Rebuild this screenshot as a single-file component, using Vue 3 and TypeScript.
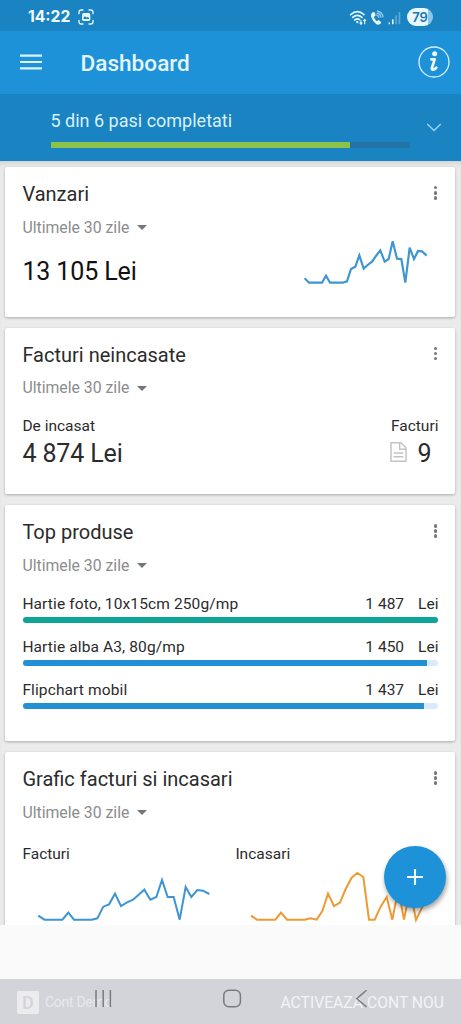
<script setup lang="ts">
interface Product {
  name: string
  amount: string
  share: number
  top?: boolean
}

const period = 'Ultimele 30 zile'

const products: Product[] = [
  { name: 'Hartie foto, 10x15cm 250g/mp', amount: '1 487', share: 100, top: true },
  { name: 'Hartie alba A3, 80g/mp', amount: '1 450', share: 97.4 },
  { name: 'Flipchart mobil', amount: '1 437', share: 96.6 },
]

const salesLine =
  '224,354 237,367 276,367 288,346 300,367 338,367 351,363 363,326 376,319 388,285 401,325 413,314 426,304 438,287 451,270 464,304 476,296 488,243 501,295 514,296 526,367 539,262 552,296 564,272 576,273 590,286'
const invoicesLine =
  '116,529 134,541 188,541 206,520 223,541 276,541 293,537 311,502 328,495 346,463 364,500 381,490 400,481 417,466 434,451 452,481 470,473 487,422 504,473 522,473 540,541 558,443 575,473 593,452 610,454 629,464'
const receiptsLine =
  '63,529 81,541 136,541 153,520 171,541 224,541 242,537 260,541 277,515 294,463 312,500 330,490 347,449 365,415 382,401 400,413 417,541 434,541 452,502 470,473 487,541 505,450 522,541 540,450 558,542 576,505 590,480'
</script>

<template>
  <div class="screen">
    <div class="status">
      <span class="clock">14:22</span>
      <svg class="capture" viewBox="0 0 48 48" width="16" height="16">
        <path d="M3 14V10Q3 3 10 3h5M33 3h5q7 0 7 7v4M45 34v4q0 7-7 7h-5M15 45h-5q-7 0-7-7v-4" fill="none" stroke="#e4f6ff" stroke-width="4" stroke-linecap="round" />
        <rect x="12" y="12" width="25" height="24" rx="5" fill="#e4f6ff" />
        <path d="M17 30v-5l4-3 5 4 3-3 4 4v3z" fill="#1a83c2" />
      </svg>
      <div class="status-right">
        <svg viewBox="356 22 160 56" width="53.3" height="18.7">
          <g fill="none" stroke="#dff5ff" stroke-width="5" stroke-linecap="round">
            <path d="M361 42Q381 24 401 42" />
            <path d="M367 50Q381 38 395 50" />
            <path d="M373 58Q381 52 388 57" />
          </g>
          <circle cx="381" cy="64" r="3.5" fill="#dff5ff" />
          <path d="M392 59v11m-4-4 4 5 4-5M403 71V56m-4 5 4-5 4 5" fill="none" stroke="#dff5ff" stroke-width="3.5" />
          <path d="M427 35q-7 5-4 15 5 14 15 21 8 4 14-3l1-3-8-7-6 4q-6-5-8-13l5-5-3-9z" fill="#e8f8ff" />
          <path d="M438 43q7 1 8 9M439 37q12 2 13 14M440 31q17 3 18 19" fill="none" stroke="#8cc5e9" stroke-width="4" />
          <g fill="#dff5ff">
            <rect x="475" y="65" width="4" height="6" rx="1" />
            <rect x="485" y="56" width="5" height="15" rx="1" />
          </g>
          <g fill="#5ba9d9">
            <rect x="495" y="44" width="5" height="27" rx="1" />
            <rect x="505" y="34" width="5" height="37" rx="1" />
          </g>
        </svg>
        <span class="battery">79</span>
      </div>
    </div>

    <header class="appbar">
      <svg class="menu" viewBox="0 0 22 16" width="22" height="16">
        <path d="M0 1.6h22M0 8h22M0 14.4h22" stroke="#dcf3ff" stroke-width="2.2" />
      </svg>
      <h1>Dashboard</h1>
      <svg class="info" viewBox="565 139 96 96" width="32" height="32">
        <circle cx="613" cy="187" r="45" fill="none" stroke="#d5f1ff" stroke-width="4" />
        <circle cx="615" cy="162" r="7.5" fill="#f2fbff" />
        <path d="M605 179h10l-8 25q-2 7 4 6 5-1 9-6" fill="none" stroke="#f2fbff" stroke-width="8" stroke-linejoin="round" stroke-linecap="round" />
      </svg>
    </header>

    <section class="steps">
      <div class="steps-main">
        <div class="steps-text">5 din 6 pasi completati</div>
        <div class="steps-track"><div class="steps-fill"></div></div>
      </div>
      <svg class="chevron" viewBox="0 0 16 9" width="16" height="9">
        <path d="M1.2 1 8 7.6 14.8 1" fill="none" stroke="#9bd3f3" stroke-width="1.4" />
      </svg>
    </section>

    <main class="content">
      <article class="card sales">
        <div class="head">
          <h2>Vanzari</h2>
          <span class="dots"><i></i><i></i><i></i></span>
        </div>
        <div class="period">{{ period }}<b class="caret"></b></div>
        <div class="sales-row">
          <div class="value dark">13 105 Lei</div>
          <svg class="sales-chart" viewBox="216 233 381 144" width="127" height="48">
            <polyline :points="salesLine" fill="none" stroke="#3d95d3" stroke-width="6.5" />
          </svg>
        </div>
      </article>

      <article class="card unpaid">
        <div class="head">
          <h2>Facturi neincasate</h2>
          <span class="dots"><i></i><i></i><i></i></span>
        </div>
        <div class="period">{{ period }}<b class="caret"></b></div>
        <div class="unpaid-row">
          <div>
            <div class="label">De incasat</div>
            <div class="value">4 874 Lei</div>
          </div>
          <div>
            <div class="label">Facturi</div>
            <div class="count">
              <svg viewBox="0 0 51 60" width="17" height="20">
                <path d="M3 2h30l15 15v41H3zM29 2v20h19" fill="none" stroke="#c4c4c4" stroke-width="4.5" stroke-linejoin="round" />
                <path d="M11 33h29M11 44h29" stroke="#c4c4c4" stroke-width="4.5" />
              </svg>
              <span class="value">9</span>
            </div>
          </div>
        </div>
      </article>

      <article class="card products">
        <div class="head">
          <h2>Top produse</h2>
          <span class="dots"><i></i><i></i><i></i></span>
        </div>
        <div class="period">{{ period }}<b class="caret"></b></div>
        <ul>
          <li v-for="p in products" :key="p.name">
            <div class="product">
              <span class="label name">{{ p.name }}</span>
              <span class="label amount">{{ p.amount }}</span>
              <span class="label unit">Lei</span>
            </div>
            <div class="bar">
              <div class="fill" :class="{ best: p.top }" :style="{ width: p.share + '%' }"></div>
            </div>
          </li>
        </ul>
      </article>

      <article class="card graph">
        <div class="head">
          <h2>Grafic facturi si incasari</h2>
          <span class="dots"><i></i><i></i><i></i></span>
        </div>
        <div class="period">{{ period }}<b class="caret"></b></div>
        <div class="charts">
          <div class="chart">
            <div class="label">Facturi</div>
            <svg viewBox="67 380 573 180" width="191" height="60">
              <polyline :points="invoicesLine" fill="none" stroke="#3d95d3" stroke-width="6" />
            </svg>
          </div>
          <div class="chart">
            <div class="label">Incasari</div>
            <svg viewBox="15 380 600 180" width="200" height="60">
              <polyline :points="receiptsLine" fill="none" stroke="#ee9a33" stroke-width="6" />
            </svg>
          </div>
        </div>
      </article>
    </main>

    <footer class="bottom">
      <span class="badge">D</span>
      <span class="account">Cont Demo</span>
      <span class="activate">ACTIVEAZA CONT NOU</span>
      <svg class="nav" viewBox="0 0 461 45" width="461" height="45">
        <g fill="none" stroke="#797a80" stroke-width="1.5">
          <path d="M96 11v17M103.2 11v17M110.4 11v17" />
          <rect x="223.8" y="11.3" width="16.6" height="16.4" rx="5" />
          <path d="M366.5 11.2 356.8 19.6 366.5 28" />
        </g>
      </svg>
    </footer>

    <button class="fab" aria-label="Adauga">
      <svg viewBox="0 0 16 16" width="16" height="16">
        <path d="M8 0v16M0 8h16" stroke="#f0faff" stroke-width="2.1" />
      </svg>
    </button>
  </div>
</template>

<style>
body {
  margin: 0;
}
</style>

<style scoped>
.screen {
  position: relative;
  display: flex;
  flex-direction: column;
  width: 461px;
  height: 1024px;
  overflow: hidden;
  background: #fafafa;
  color: #2b2b2b;
  font-family: Roboto, 'Liberation Sans', sans-serif;
}
h1,
h2,
ul {
  margin: 0;
  padding: 0;
  font-weight: 400;
  list-style: none;
}
svg {
  display: block;
  flex: none;
}
.status {
  display: flex;
  align-items: center;
  height: 31px;
  padding: 3px 28px 0 28px;
  box-sizing: border-box;
  background: #1a83c2;
  color: #effaff;
}
.clock {
  font: 700 15.7px/20px Inter, Roboto, sans-serif;
  width: 49.5px;
  white-space: nowrap;
}
.status-right {
  display: flex;
  align-items: center;
  gap: 5px;
  margin-left: auto;
}
.battery {
  width: 26px;
  height: 18px;
  border-radius: 9px;
  background: linear-gradient(90deg, #e8f8ff 79%, #8fc6e8 79%);
  color: #1b76b0;
  font: 600 13px/18px Inter, Roboto, sans-serif;
  text-align: center;
}
.appbar {
  display: flex;
  align-items: center;
  height: 62.5px;
  padding: 0 11px 0 20px;
  background: #1d92d9;
}
.appbar h1 {
  margin: 3px 0 0 38.5px;
  font-size: 22.6px;
  font-weight: 500;
  line-height: 28px;
  color: #e4f6ff;
}
.info {
  margin-left: auto;
}
.steps {
  display: flex;
  justify-content: space-between;
  height: 67.5px;
  padding: 0 19px 0 50.5px;
  background: #1a83c2;
}
.steps-main {
  width: 359.5px;
  padding-top: 16px;
}
.steps-text {
  font-size: 18px;
  line-height: 22px;
  color: #d9f1fd;
}
.steps-track {
  height: 5.5px;
  margin-top: 10.5px;
  background: #2273a6;
}
.steps-fill {
  width: 83.2%;
  height: 100%;
  background: #8bc34a;
}
.chevron {
  margin-top: 29px;
}
.content {
  display: flex;
  flex-direction: column;
  gap: 11px;
  height: 764px;
  padding: 6px 5.6px 0 5.4px;
  box-sizing: border-box;
  overflow: hidden;
  background: #ebebeb;
  box-shadow: inset 0 5px 5px -3px #cfcfcf;
}
.card {
  flex: none;
  box-sizing: border-box;
  padding: 15.3px 17px 0;
  border-radius: 2px;
  background: #fff;
  box-shadow: 0 1px 3px rgba(0, 0, 0, 0.28);
}
.sales {
  height: 149.7px;
}
.unpaid {
  height: 166.5px;
}
.products {
  height: 236px;
}
.graph {
  height: 220px;
}
.head {
  display: flex;
  justify-content: space-between;
}
h2 {
  font-size: 20px;
  line-height: 24px;
}
.dots {
  display: flex;
  flex-direction: column;
  gap: 1.7px;
  padding: 3.8px 1.4px 0 0;
}
.dots i {
  width: 3.4px;
  height: 3.4px;
  border-radius: 50%;
  background: #777;
}
.period {
  display: flex;
  align-items: center;
  margin-top: 11.3px;
  font-size: 15.8px;
  line-height: 20px;
  color: #8c8c8c;
}
.caret {
  margin-left: 8px;
  border: 5.3px solid transparent;
  border-top: 5.5px solid #777;
  border-bottom: 0;
}
.value {
  font-size: 25px;
  line-height: 30px;
  letter-spacing: -0.12px;
}
.dark {
  color: #111;
}
.label {
  font-size: 15.5px;
  line-height: 20px;
}
.name {
  letter-spacing: 0.12px;
}
.sales-row {
  display: flex;
  justify-content: space-between;
}
.sales-row .value {
  margin-top: 19px;
}
.sales-chart {
  margin: 0.6px 9px 0 0;
}
.unpaid-row {
  display: flex;
  justify-content: space-between;
  margin-top: 17.7px;
}
.unpaid-row .label {
  margin-bottom: 3px;
}
.count {
  display: flex;
  align-items: center;
  gap: 10.5px;
  margin-left: -0.8px;
}
.count svg {
  margin-top: -4px;
}
.products ul {
  display: grid;
  gap: 14.6px;
  margin-top: 18.6px;
}
.product {
  display: flex;
}
.amount {
  margin-left: auto;
}
.unit {
  margin-left: 14px;
}
.bar {
  height: 5.4px;
  margin: 3px 0.5px 0 1px;
  border-radius: 3px;
  overflow: hidden;
  background: #d9eafa;
}
.fill {
  height: 100%;
  background: #2290d4;
}
.best {
  background: #0fa596;
}
.charts {
  display: flex;
  gap: 22px;
  margin-top: 21px;
}
.chart {
  flex: none;
}
.chart svg {
  margin-top: 2.5px;
}
.bottom {
  position: relative;
  display: flex;
  align-items: center;
  height: 45px;
  margin-top: auto;
  padding: 1px 17px 0;
  box-sizing: border-box;
  background: #d3d4da;
}
.badge {
  width: 22px;
  height: 23px;
  border-radius: 2px;
  background: #ececef;
  color: #d3d4da;
  font-size: 18px;
  font-weight: 500;
  line-height: 23px;
  text-align: center;
}
.account {
  margin-left: 6px;
  font-size: 14px;
  letter-spacing: -0.3px;
  color: #e8e8ec;
}
.activate {
  margin-left: auto;
  font-size: 15.7px;
  color: #f2f3f6;
}
.nav {
  position: absolute;
  inset: 0;
}
.fab {
  position: absolute;
  left: 383.7px;
  top: 845.7px;
  display: flex;
  align-items: center;
  justify-content: center;
  width: 62.6px;
  height: 62.6px;
  padding: 0;
  border: 0;
  border-radius: 50%;
  background: #1d92d9;
  box-shadow: 1px 3px 5px rgba(0, 0, 0, 0.38);
}
</style>
